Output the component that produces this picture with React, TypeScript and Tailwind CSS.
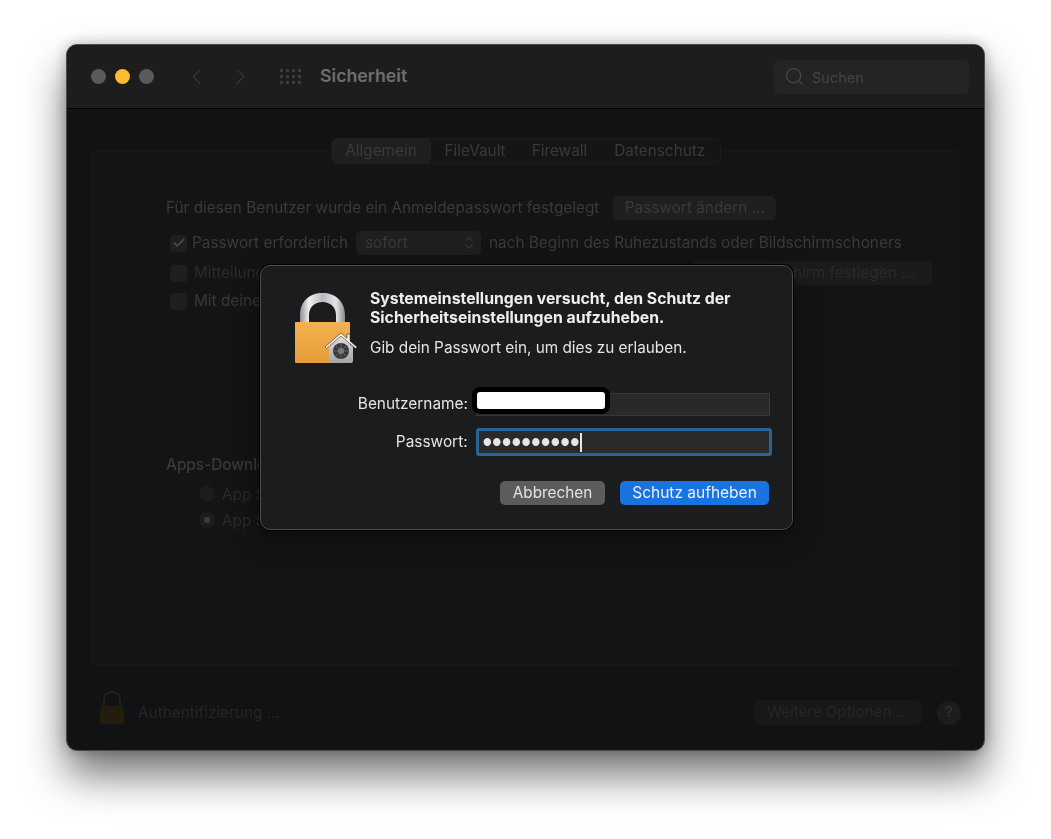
import { ChevronLeft, ChevronRight, Check, ChevronsUpDown, Search } from "lucide-react";

const LockIcon = ({ className }: { className?: string }) => (
  <svg viewBox="0 0 64 72" className={className}>
    <defs>
      <linearGradient id="shackle" x1="0" x2="1" y1="0" y2="0">
        <stop offset="0" stopColor="#8f9094" />
        <stop offset="0.2" stopColor="#f0f0f2" />
        <stop offset="0.5" stopColor="#b9babd" />
        <stop offset="0.8" stopColor="#e4e4e6" />
        <stop offset="1" stopColor="#88898c" />
      </linearGradient>
      <linearGradient id="body" x1="0" x2="0" y1="0" y2="1">
        <stop offset="0" stopColor="#f3b252" />
        <stop offset="1" stopColor="#e69a36" />
      </linearGradient>
      <linearGradient id="house" x1="0" x2="0" y1="0" y2="1">
        <stop offset="0" stopColor="#dcdcde" />
        <stop offset="1" stopColor="#a5a5a8" />
      </linearGradient>
    </defs>
    <path d="M6 32V23C6 9 16 1 28.500 1S51 9 51 23v9h-9V23c0-8-6-13-13.500-13S15 15 15 23v9z" fill="url(#shackle)" />
    <rect x="1" y="30" width="55" height="41" rx="1" fill="url(#body)" />
    <path d="M31 55 47 41l6 5.300V42h3v7l7 6-1.500 1.500L47 44 32.500 56.500z" fill="#f4f4f4" stroke="#2a2a2a" strokeWidth="0.6" />
    <path d="M35 55 47 44.500 59 55v14a2 2 0 0 1-2 2H37a2 2 0 0 1-2-2z" fill="url(#house)" />
    <circle cx="47" cy="59" r="8" fill="#39393b" />
    <circle cx="47" cy="59" r="3" fill="#7c7c7f" />
    <path d="M47 51.500v15M39.500 59h15M41.800 53.800l10.400 10.400M52.200 53.800 41.800 64.200" stroke="#77777a" strokeWidth="0.7" />
  </svg>
);

const Checkbox = ({ checked }: { checked?: boolean }) => (
  <span className="flex h-[17px] w-[17px] shrink-0 items-center justify-center rounded-[4px] bg-[#1e1f20]">
    {checked && <Check className="h-[14px] w-[14px] text-[#4c4c4d]" strokeWidth={3} />}
  </span>
);

const Radio = ({ checked }: { checked?: boolean }) => (
  <span className="flex h-[16px] w-[16px] shrink-0 items-center justify-center rounded-full bg-[#1b1c1d]">
    {checked && <span className="h-[6px] w-[6px] rounded-full bg-[#3a3a3b]" />}
  </span>
);

const DimButton = ({ children, className }: { children: string; className?: string }) => (
  <span className={`flex items-center justify-center rounded-[5px] ${className}`}>{children}</span>
);

export default function App() {
  return (
    <div className="h-[839px] w-full overflow-hidden bg-white pl-[66px] pt-[44px] font-['Inter','Liberation_Sans',sans-serif]">
      <div className="relative flex h-[707px] w-[919px] flex-col rounded-[11px] border border-[#4b4b4c] bg-[#111213] shadow-[0_24px_42px_rgba(0,0,0,0.55),0_0_14px_rgba(0,0,0,0.25)] blur-[0.4px]">
        {/* title bar */}
        <div className="flex h-[64px] shrink-0 items-center rounded-t-[10px] border-b border-black bg-[#1d1d1e] pl-[24px] pr-[15px]">
          <span className="h-[15px] w-[15px] rounded-full bg-[#5a5b5d]" />
          <span className="ml-[9px] h-[15px] w-[15px] rounded-full bg-[#fcbc2d]" />
          <span className="ml-[9px] h-[15px] w-[15px] rounded-full bg-[#5a5b5d]" />
          <ChevronLeft className="ml-[29px] h-[27px] w-[27px] text-[#343435]" strokeWidth={1.2} />
          <ChevronRight className="ml-[17px] h-[27px] w-[27px] text-[#343435]" strokeWidth={1.2} />
          <div className="ml-[26px] grid grid-cols-4 gap-[3px]">
            {Array.from({ length: 12 }).map((_, i) => (
              <span key={i} className="h-[3px] w-[3px] bg-[#3b3b3c]" />
            ))}
          </div>
          <span className="ml-[19px] text-[17.7px] font-semibold text-[#6e6e6f]">Sicherheit</span>
          <div className="ml-auto flex h-[34px] w-[195px] items-center rounded-[6px] bg-[#242425] pl-[10px]">
            <Search className="h-[21px] w-[21px] text-[#48484a]" strokeWidth={1.4} />
            <span className="ml-[7px] mt-[2px] text-[14.5px] text-[#454546]">Suchen</span>
          </div>
        </div>

        {/* main panel */}
        <div className="flex flex-1 flex-col px-[25px] pt-[41px]">
          <div className="h-[516px] rounded-[4px] border border-[#191a1b] bg-[#131415] text-[15.35px] text-[#393a3b]">
            <div className="-mt-[13px] flex justify-center">
              <div className="flex h-[26px] w-[390px] items-center rounded-[6px] border border-[#1a1b1c] bg-[#141516]">
                <span className="flex h-[26px] w-[99px] items-center justify-center rounded-[6px] bg-[#1e1f20]">Allgemein</span>
                <span className="ml-[14px]">FileVault</span>
                <span className="ml-[26px]">Firewall</span>
                <span className="ml-[27px]">Datenschutz</span>
              </div>
            </div>

            <div className="pl-[73px] pt-[32px]">
              <div className="flex h-[24px] items-center">
                <span>Für diesen Benutzer wurde ein Anmeldepasswort festgelegt</span>
                <DimButton className="ml-[14px] h-[24px] w-[163px] bg-[#1e1f20]">Passwort ändern ...</DimButton>
              </div>
              <div className="mt-[11px] flex h-[24px] items-center pl-[4px]">
                <Checkbox checked />
                <span className="ml-[5px]">Passwort erforderlich</span>
                <span className="ml-[8px] flex h-[24px] w-[125px] items-center justify-between rounded-[5px] bg-[#1e1f20] pl-[9px] pr-[4px]">
                  sofort
                  <ChevronsUpDown className="h-[16px] w-[16px] text-[#444445]" strokeWidth={1.5} />
                </span>
                <span className="ml-[8px]">nach Beginn des Ruhezustands oder Bildschirmschoners</span>
              </div>
              <div className="mt-[6px] flex h-[24px] items-center pl-[4px]">
                <Checkbox />
                <span className="ml-[7px] text-[#2a2b2c]">Mitteilung anzeigen, wenn der Bildschirm gesperrt ist</span>
                <DimButton className="ml-auto mr-[26px] h-[24px] w-[240px] bg-[#1a1b1c] text-[#2a2b2c]">Sperrbildschirm festlegen ...</DimButton>
              </div>
              <div className="mt-[4px] flex h-[24px] items-center pl-[4px]">
                <Checkbox />
                <span className="ml-[7px]">Mit deiner Apple Watch entsperren</span>
              </div>
              <div className="mt-[140px] font-medium">Apps-Download erlauben von:</div>
              <div className="mt-[5px] flex h-[26px] items-center pl-[33px] text-[#2a2b2c]">
                <Radio />
                <span className="ml-[7px]">App Store</span>
              </div>
              <div className="flex h-[26px] items-center pl-[33px] text-[#2a2b2c]">
                <Radio checked />
                <span className="ml-[7px]">App Store und verifizierten Entwicklern</span>
              </div>
            </div>
          </div>

          {/* bottom bar */}
          <div className="flex flex-1 items-center pl-[7px]">
            <LockIconDim />
            <span className="ml-[13px] mt-[10px] text-[15.35px] text-[#252627]">Authentifizierung ...</span>
            <DimButton className="ml-auto mt-[9px] h-[25px] w-[168px] bg-[#171819] text-[15px] font-medium text-[#242526]">Weitere Optionen ...</DimButton>
            <span className="ml-[15px] mr-[-2px] mt-[9px] flex h-[24px] w-[24px] items-center justify-center rounded-full bg-[#1b1c1d] text-[15px] font-semibold text-[#2e2f30]">?</span>
          </div>
        </div>

        {/* password sheet */}
        <div className="absolute left-[193px] top-[220px] flex h-[265px] w-[533px] flex-col rounded-[10px] border border-[#4e4e50] bg-[#1b1c1e] pl-[33px] pr-[20px] text-[#e4e4e5] shadow-[0_0_0_1px_#000,0_8px_30px_rgba(0,0,0,0.45)]">
          <div className="flex pt-[26px]">
            <LockIcon className="h-[72px] w-[64px] shrink-0" />
            <div className="-mt-[3px] ml-[12px]">
              <p className="whitespace-nowrap text-[15.8px] font-bold leading-[19px] text-[#eeeeef]">
                Systemeinstellungen versucht, den Schutz der
                <br />
                Sicherheitseinstellungen aufzuheben.
              </p>
              <p className="mt-[11px] text-[15.3px] leading-[19px]">Gib dein Passwort ein, um dies zu erlauben.</p>
            </div>
          </div>

          <div className="mt-[28px] flex h-[24px] items-center">
            <span className="w-[174px] text-right text-[15.4px]">Benutzername:</span>
            <div className="relative ml-[8px] h-[23px] w-[294px] border border-[#363738] bg-[#29292a]">
              <span className="absolute -left-[5px] -top-[7px] h-[27px] w-[138px] rounded-[8px] border-[5px] border-black bg-white" />
            </div>
          </div>

          <div className="mt-[12px] flex h-[28px] items-center">
            <span className="w-[174px] text-right text-[15.4px]">Passwort:</span>
            <div className="ml-[8px] flex h-[28px] w-[297px] items-center rounded-[3px] border-[3px] border-[#2a6497] bg-[#2a2a2b] pl-[4px]">
              <span className="text-[10px] leading-none tracking-[0.6px] text-[#e6e6e6]">●●●●●●●●●●</span>
              <span className="h-[19px] w-[1.500px] bg-[#e6e6e6]" />
            </div>
          </div>

          <div className="mt-[25px] flex justify-end pr-[3px]">
            <span className="flex h-[24px] w-[105px] items-center justify-center rounded-[5px] bg-[#5b5c5d] text-[15.3px] text-[#e2e2e3]">Abbrechen</span>
            <span className="ml-[15px] flex h-[24px] w-[149px] items-center justify-center rounded-[5px] bg-[#1a74e0] text-[15.5px] text-[#e8f0fb]">Schutz aufheben</span>
          </div>
        </div>
      </div>
    </div>
  );
}

function LockIconDim() {
  return (
    <svg viewBox="0 0 26 34" className="h-[34px] w-[26px] shrink-0">
      <path d="M5 16V9c0-5 3.500-8 8-8s8 3 8 8v7" fill="none" stroke="#202020" strokeWidth="2" />
      <rect x="1" y="15" width="24" height="18" rx="1" fill="#241d0e" />
    </svg>
  );
}
